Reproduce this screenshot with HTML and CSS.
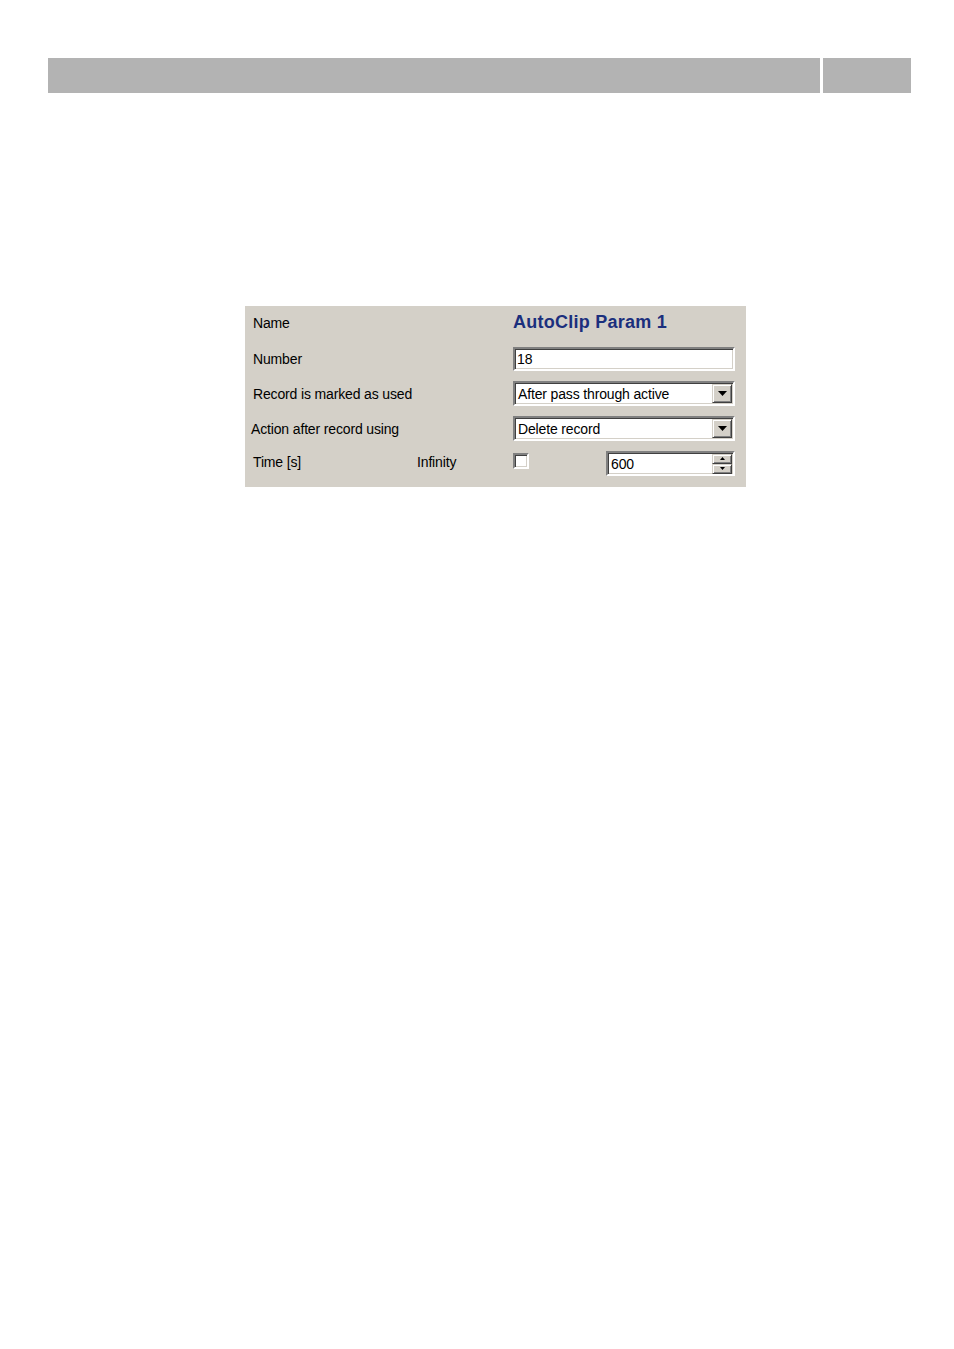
FILE: index.html
```html
<!DOCTYPE html>
<html>
<head>
<meta charset="utf-8">
<title>AutoClip Param</title>
<link rel="stylesheet" href="styles.css">
</head>
<body>
<div class="header">
  <div class="bar bar-main"></div>
  <div class="bar bar-side"></div>
</div>

<div class="dialog">
  <div class="row row-title">
    <div class="label">Name</div>
    <div class="title">AutoClip Param 1</div>
  </div>
  <div class="row row-edit">
    <div class="label">Number</div>
    <div class="field edit"><span class="val">18</span></div>
  </div>
  <div class="row row-combo">
    <div class="label">Record is marked as used</div>
    <div class="field combo">
      <span class="val">After pass through active</span>
      <span class="btn drop"><svg width="9" height="5" viewBox="0 0 9 5"><path d="M0 0H9L4.5 5Z" fill="#000"/></svg></span>
    </div>
  </div>
  <div class="row row-combo">
    <div class="label shift">Action after record using</div>
    <div class="field combo">
      <span class="val">Delete record</span>
      <span class="btn drop"><svg width="9" height="5" viewBox="0 0 9 5"><path d="M0 0H9L4.5 5Z" fill="#000"/></svg></span>
    </div>
  </div>
  <div class="row row-time">
    <div class="label time-label">Time [s]</div>
    <div class="label inf-label">Infinity</div>
    <div class="check"></div>
    <div class="field spin">
      <span class="val">600</span>
      <span class="spin-btns">
        <span class="btn sbtn"><svg width="5" height="3" viewBox="0 0 5 3"><path d="M0 3H5L2.5 0Z" fill="#000"/></svg></span>
        <span class="btn sbtn"><svg width="5" height="3" viewBox="0 0 5 3"><path d="M0 0H5L2.5 3Z" fill="#000"/></svg></span>
      </span>
    </div>
  </div>
</div>
</body>
</html>
```

FILE: styles.css
```css
html, body {
  margin: 0;
  padding: 0;
  background: #ffffff;
}

body {
  font-family: "Liberation Sans", Arial, sans-serif;
  color: #000;
}

.header {
  display: flex;
  gap: 3px;
  margin: 58px 0 0 48px;
  height: 35px;
}

.bar {
  background: #b3b3b3;
  height: 35px;
}

.bar-main { width: 772px; }
.bar-side { width: 88px; }

.dialog {
  margin: 213px 0 0 245px;
  width: 501px;
  height: 181px;
  box-sizing: border-box;
  background: #d4d0c8;
  padding: 0 11px 0 8px;
  display: flex;
  flex-direction: column;
}

.row {
  display: flex;
  align-items: center;
}

.label {
  font-size: 14px;
  letter-spacing: -0.15px;
  width: 260px;
  flex: none;
  white-space: nowrap;
}

.label.shift { margin-left: -2px; width: 262px; }

.row-title {
  height: 32px;
  margin-top: 1px;
  margin-bottom: 8px;
}

.title {
  font-size: 18px;
  font-weight: bold;
  color: #1b2f7d;
  letter-spacing: 0.25px;
  margin-top: -2px;
}

.row-edit { height: 24px; }
.row-combo { height: 25px; margin-top: 10px; }
.row-time { height: 25px; margin-top: 10px; }

.field {
  box-sizing: border-box;
  width: 222px;
  height: 100%;
  background: #ffffff;
  border-style: solid;
  border-width: 2px;
  border-color: #808080 #ffffff #ffffff #808080;
  box-shadow: inset 1px 1px 0 #404040, inset -1px -1px 0 #d4d0c8;
  display: flex;
  align-items: center;
  font-size: 14px;
  letter-spacing: -0.15px;
}

.edit .val { padding-left: 2px; }

.combo { justify-content: space-between; }
.combo .val { padding-left: 3px; }

.btn {
  box-sizing: border-box;
  background: #d4d0c8;
  border-style: solid;
  border-width: 1px;
  border-color: #d4d0c8 #404040 #404040 #d4d0c8;
  box-shadow: inset 1px 1px 0 #ffffff, inset -1px -1px 0 #808080;
  display: flex;
  align-items: center;
  justify-content: center;
}

.drop {
  width: 20px;
  height: 19px;
  margin-right: 1px;
}

.time-label { width: 164px; margin-top: -3px; }
.inf-label { width: 96px; margin-top: -3px; }

.check {
  box-sizing: border-box;
  width: 16px;
  height: 16px;
  background: #ffffff;
  border-style: solid;
  border-width: 2px;
  border-color: #808080 #ffffff #ffffff #808080;
  box-shadow: inset 1px 1px 0 #404040, inset -1px -1px 0 #d4d0c8;
  margin-top: -5px;
}

.spin {
  width: 129px;
  margin-left: 77px;
  justify-content: space-between;
}

.spin .val { padding-left: 3px; margin-top: 1px; }

.spin-btns {
  display: flex;
  flex-direction: column;
  margin-right: 1px;
}

.sbtn {
  width: 20px;
  height: 10px;
}
```
